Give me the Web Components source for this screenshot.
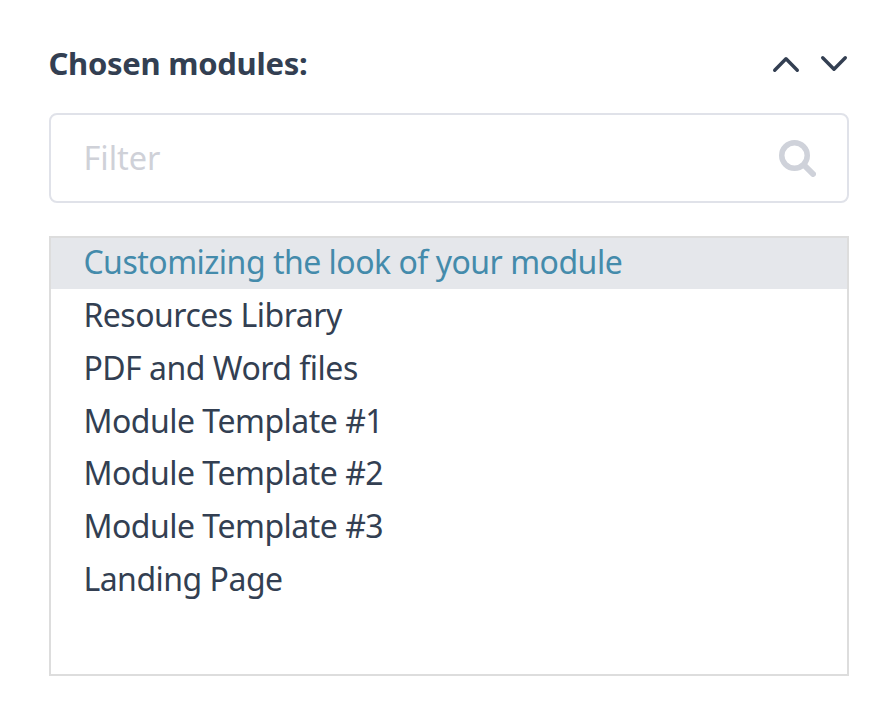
<!DOCTYPE html>
<html>
<head>
<meta charset="utf-8">
<title>Chosen modules</title>
<style>
  html, body { margin: 0; background: #fff; }
  body { font-family: "Noto Sans", "Open Sans", sans-serif; color: #333f52; }
</style>
</head>
<body>
<module-picker label="Chosen modules:">
  <module-option selected>Customizing the look of your module</module-option>
  <module-option>Resources Library</module-option>
  <module-option>PDF and Word files</module-option>
  <module-option>Module Template #1</module-option>
  <module-option>Module Template #2</module-option>
  <module-option>Module Template #3</module-option>
  <module-option>Landing Page</module-option>
</module-picker>
<script>
class ModuleOption extends HTMLElement {
  constructor() {
    super();
    this.attachShadow({ mode: 'open' });
    this.shadowRoot.innerHTML = `
      <style>
        :host {
          display: block;
          height: 52.8px;
          line-height: 51px;
          padding-left: 32.4px;
          font-size: 32px;
          letter-spacing: -0.5px;
          white-space: nowrap;
        }
        :host([selected]) {
          height: 51px;
          line-height: 47px;
          background: #e5e7eb;
          color: #448bab;
        }
      </style>
      <slot></slot>
    `;
  }
}

class FilterBox extends HTMLElement {
  constructor() {
    super();
    this.attachShadow({ mode: 'open' });
    this.shadowRoot.innerHTML = `
      <style>
        :host {
          display: flex;
          align-items: center;
          justify-content: space-between;
          box-sizing: border-box;
          height: 90px;
          padding: 0 31px 0 32.4px;
          border: 2px solid #e0e2e9;
          border-radius: 8px;
          background: #fff;
        }
        span {
          position: relative;
          top: -1px;
          font-size: 32.5px;
          color: #cfd1d8;
        }
        svg { display: block; }
      </style>
      <span>Filter</span>
      <svg width="38" height="38" viewBox="0 0 38 38" fill="none" stroke="#cfd2da" stroke-linecap="round">
        <circle cx="16.5" cy="16.5" r="12.75" stroke-width="5.5"/>
        <path d="M26.5 26.5l8.5 8.5" stroke-width="6"/>
      </svg>
    `;
  }
}

class ModulePicker extends HTMLElement {
  constructor() {
    super();
    this.attachShadow({ mode: 'open' });
    this.shadowRoot.innerHTML = `
      <style>
        :host {
          display: block;
          box-sizing: border-box;
          width: 800px;
          margin-left: 49px;
          padding-top: 42px;
        }
        .head {
          display: flex;
          align-items: center;
          justify-content: space-between;
          height: 44px;
          margin-bottom: 27px;
        }
        h2 {
          margin: -2px 0 0 -0.6px;
          font-size: 31px;
          font-weight: 700;
          letter-spacing: -0.27px;
          color: #333f52;
        }
        .arrows { display: flex; gap: 20px; margin-right: 1px; }
        .arrows svg { display: block; }
        .list {
          box-sizing: border-box;
          height: 440px;
          margin-top: 33px;
          border: 2px solid #dddddd;
          overflow: hidden;
        }
      </style>
      <div class="head">
        <h2></h2>
        <div class="arrows">
          <svg width="28" height="18" viewBox="0 0 28 18" fill="none" stroke="#333f52" stroke-width="3.4" stroke-linecap="round" stroke-linejoin="round"><path d="M2.7 15.3L14 3.7l11.3 11.6"/></svg>
          <svg width="28" height="18" viewBox="0 0 28 18" fill="none" stroke="#333f52" stroke-width="3.4" stroke-linecap="round" stroke-linejoin="round"><path d="M2.7 2.7L14 14.3 25.3 2.7"/></svg>
        </div>
      </div>
      <filter-box></filter-box>
      <div class="list"><slot></slot></div>
    `;
    this.shadowRoot.querySelector('h2').textContent = this.getAttribute('label');
  }
}

customElements.define('module-option', ModuleOption);
customElements.define('filter-box', FilterBox);
customElements.define('module-picker', ModulePicker);
</script>
</body>
</html>
